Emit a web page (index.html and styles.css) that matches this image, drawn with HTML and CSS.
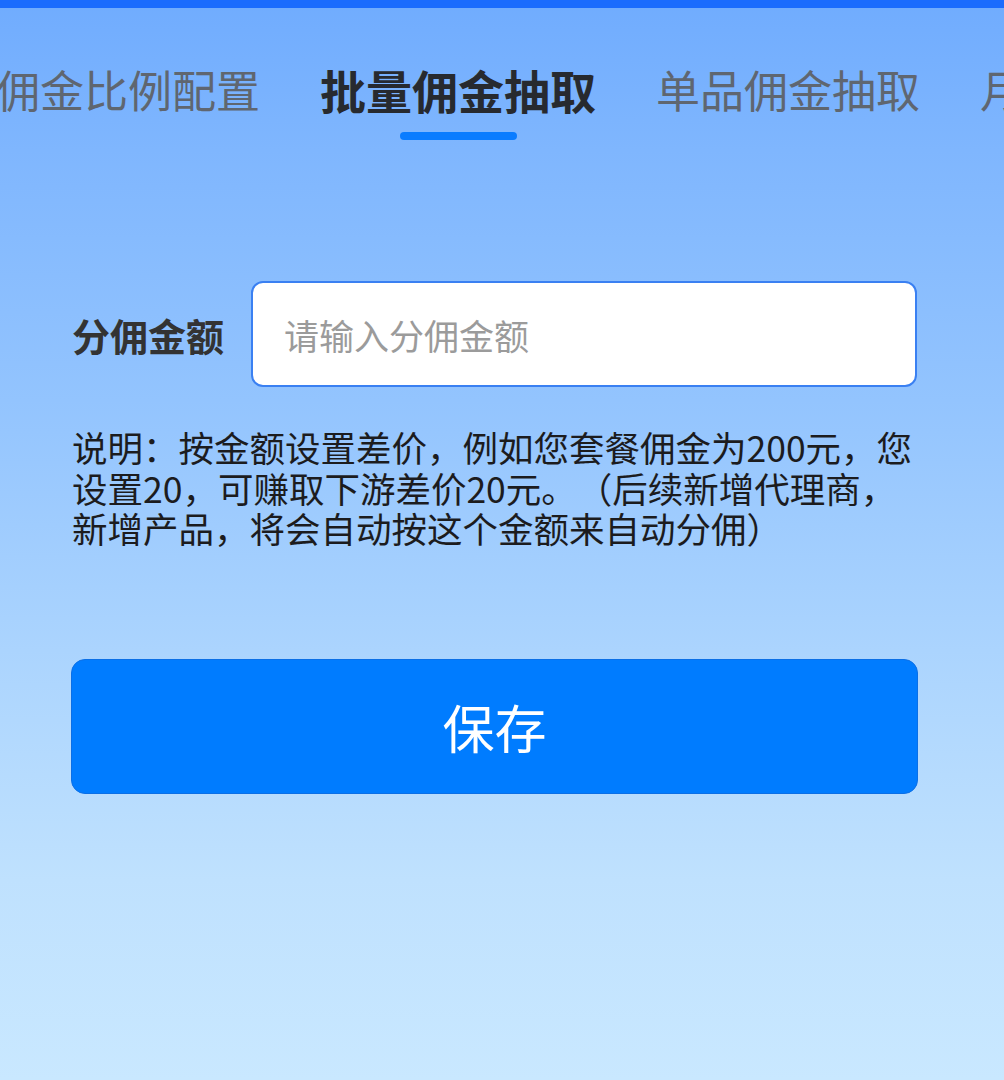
FILE: index.html
```html
<!DOCTYPE html>
<html lang="zh-CN">
<head>
<meta charset="utf-8">
<title>批量佣金抽取</title>
<link rel="stylesheet" href="styles.css">
</head>
<body>
<div class="page">
  <div class="topbar"></div>
  <nav class="tabs">
    <div class="tab">佣金比例配置</div>
    <div class="tab active">批量佣金抽取<span class="indicator"></span></div>
    <div class="tab">单品佣金抽取</div>
    <div class="tab">月结佣金抽取</div>
  </nav>
  <div class="form-row">
    <label class="label" for="amt">分佣金额</label>
    <input class="input" id="amt" type="text" placeholder="请输入分佣金额">
  </div>
  <p class="desc">说明：按金额设置差价，例如您套餐佣金为200元，您设置20，可赚取下游差价20元。（后续新增代理商，新增产品，将会自动按这个金额来自动分佣）</p>
  <button class="save" type="button">保存</button>
</div>
</body>
</html>
```
FILE: styles.css
```css
html, body {
  margin: 0;
  padding: 0;
}
body {
  width: 1004px;
  min-height: 1080px;
  overflow: hidden;
  font-family: "Noto Sans CJK SC", "Noto Sans", sans-serif;
  text-spacing-trim: space-all;
  background: linear-gradient(180deg, #70acfe 0px, #7fb6fe 150px, #93c4fe 400px, #abd4fe 650px, #bfe1fe 880px, #c9e8ff 1080px);
}
.page {
  min-height: 1080px;
}
.topbar {
  height: 8px;
  background: #1b6cfd;
}
.tabs {
  display: flex;
  gap: 60px;
  padding-top: 56px;
  margin-left: -4px;
  white-space: nowrap;
  overflow: hidden;
  height: 84px;
}
.tab {
  position: relative;
  flex: none;
  font-size: 44px;
  line-height: 50px;
  height: 50px;
  color: #5f6670;
}
.tab.active {
  font-size: 46px;
  font-weight: 700;
  color: #272a2f;
}
.indicator {
  position: absolute;
  left: 50%;
  top: 68px;
  width: 117px;
  height: 8px;
  margin-left: -58px;
  border-radius: 4px;
  background: #0a7cff;
}
.form-row {
  display: flex;
  align-items: center;
  gap: 27px;
  margin: 133px 87px 0 72px;
}
.label {
  flex: none;
  font-size: 38px;
  font-weight: 700;
  color: #333333;
}
.input {
  flex: 1;
  min-width: 0;
  box-sizing: border-box;
  height: 106px;
  border: 2.5px solid #3a80f2;
  border-radius: 12px;
  background: #ffffff;
  padding: 0 0 0 31px;
  font-family: inherit;
  font-size: 35px;
  color: #333;
  outline: none;
}
.input::placeholder {
  color: #9b9b9b;
}
.desc {
  margin: 40px 86px 0 72px;
  font-size: 35.5px;
  line-height: 40.5px;
  color: #1c1c1e;
}
.save {
  display: block;
  box-sizing: border-box;
  width: 847px;
  height: 135px;
  margin: 110px 0 0 71px;
  border: 1px solid #0b6fe6;
  border-radius: 14px;
  background: #007cff;
  color: #ffffff;
  font-family: inherit;
  font-size: 52px;
  padding: 0;
}
```
